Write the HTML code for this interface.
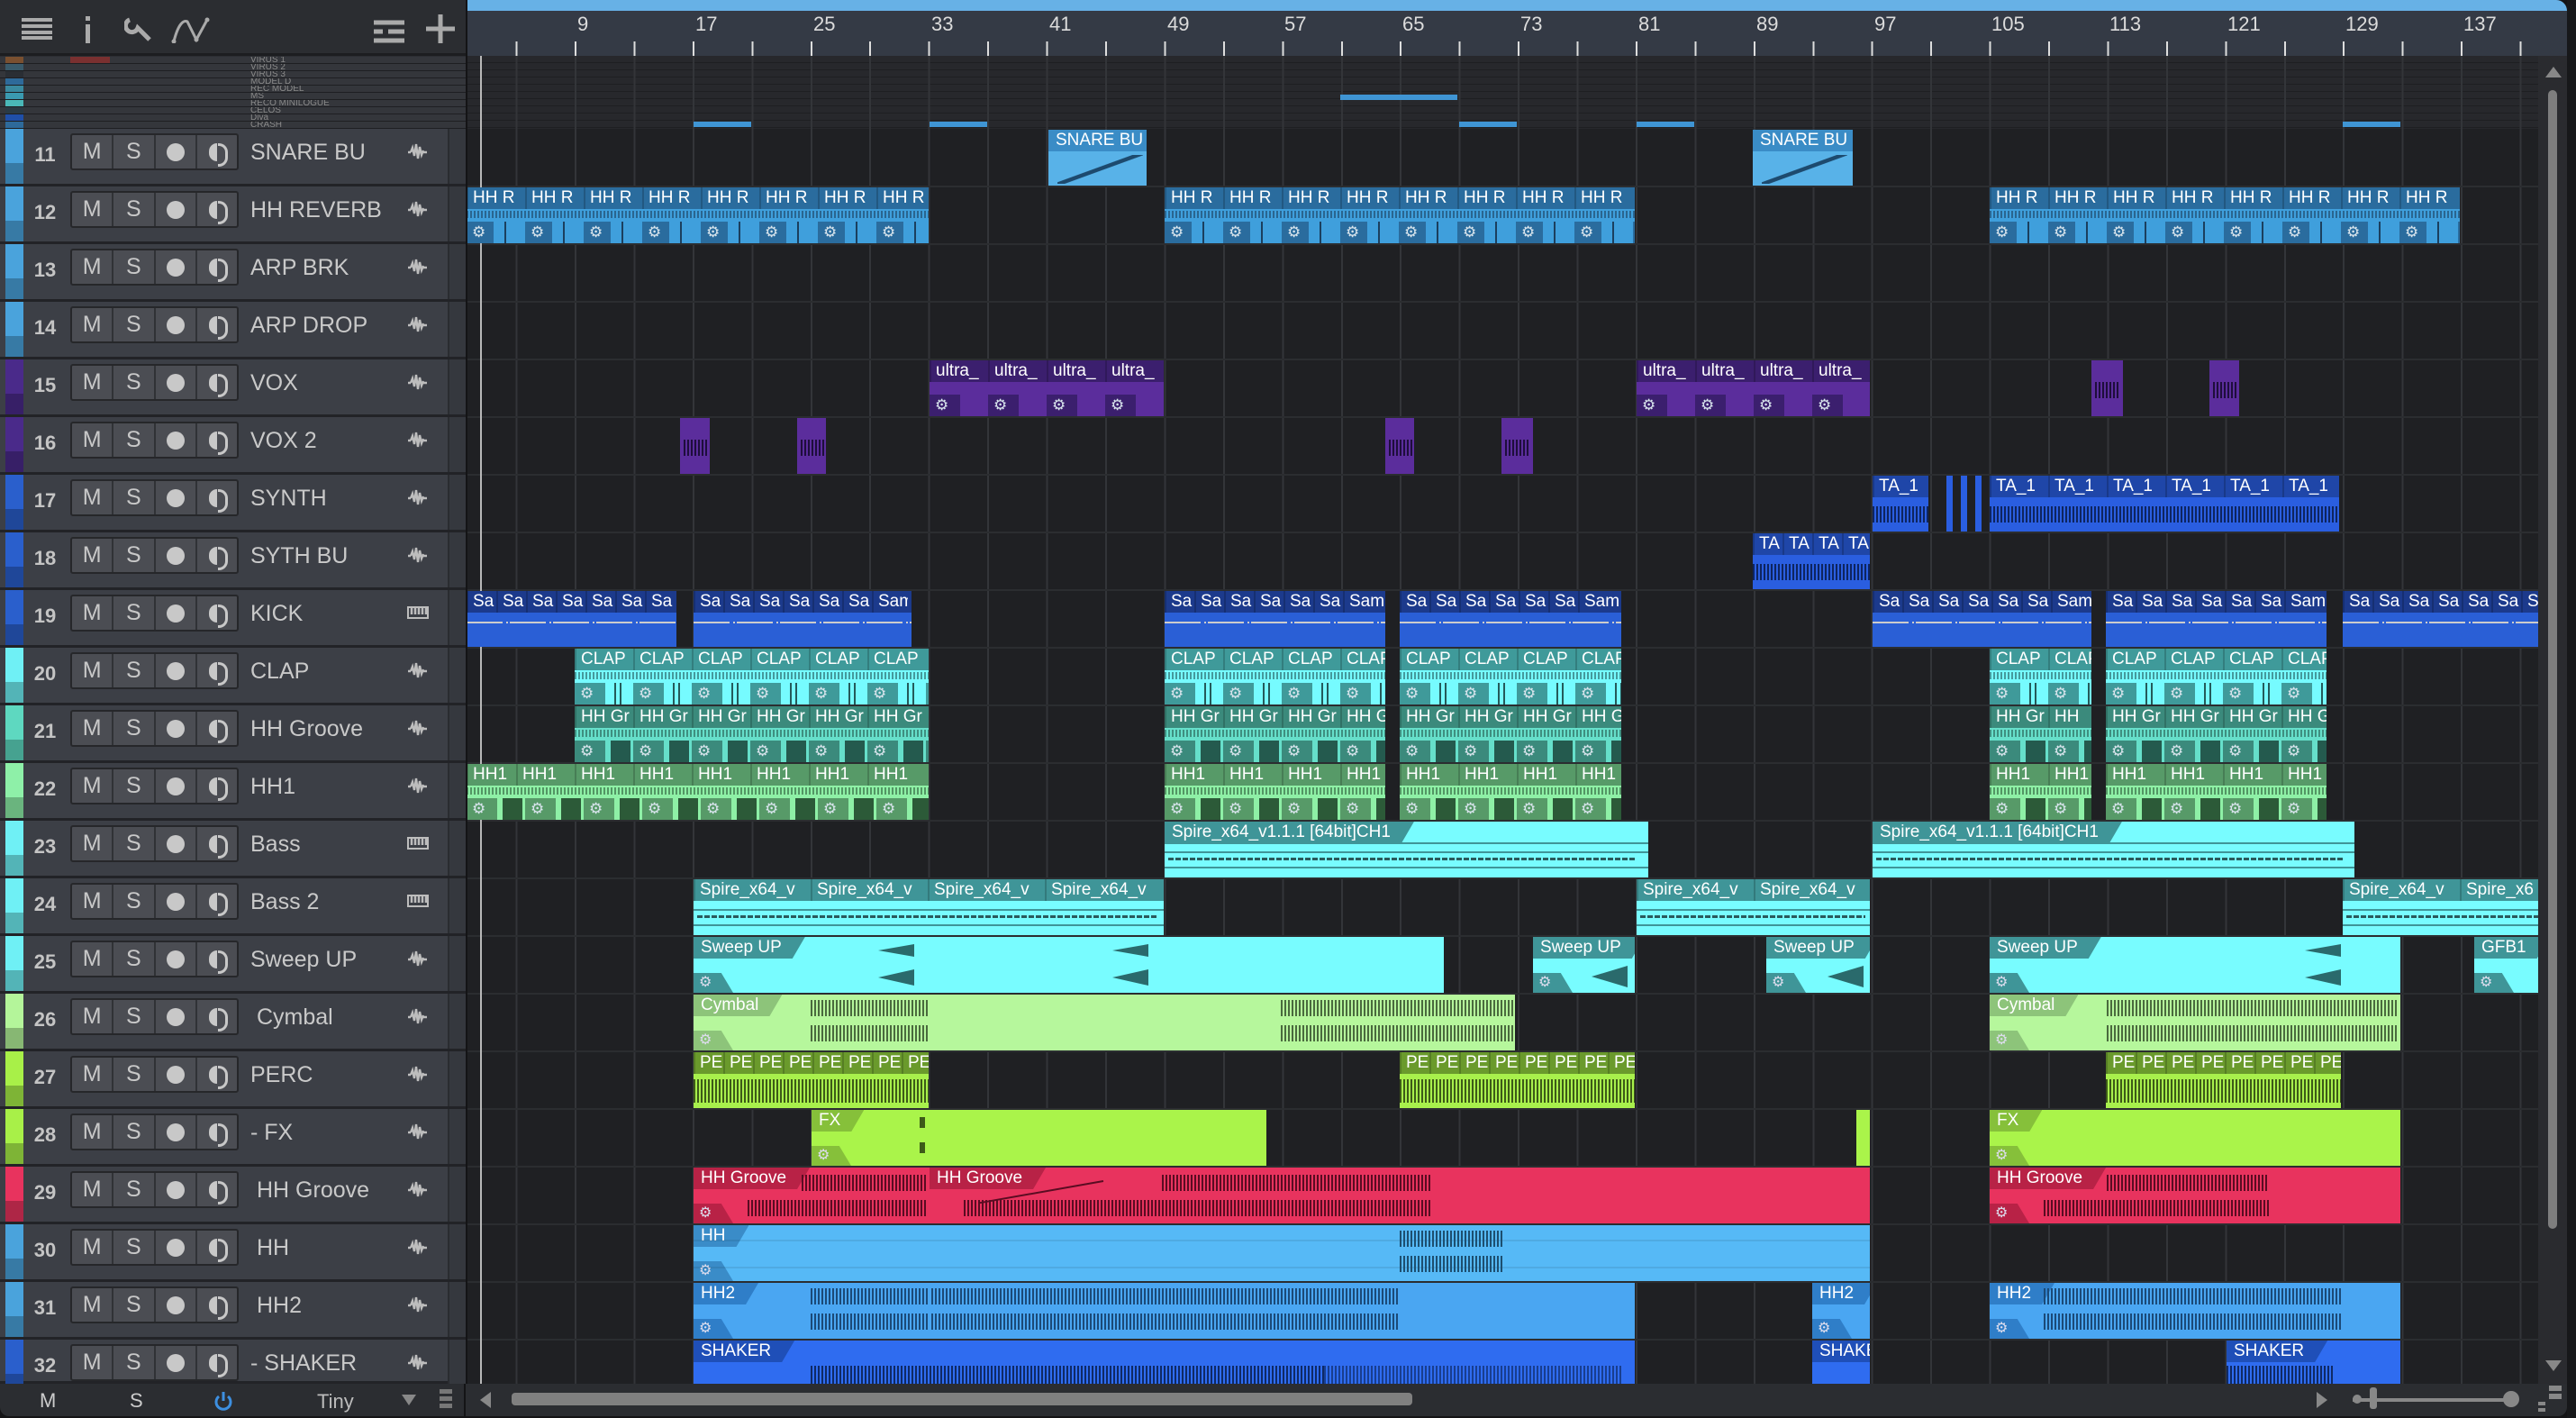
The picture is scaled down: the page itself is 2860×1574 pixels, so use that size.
<!DOCTYPE html>
<html><head><meta charset="utf-8"><style>
*{margin:0;padding:0;box-sizing:border-box}
body{width:2860px;height:1574px;background:#141416;overflow:hidden;position:relative;font-family:"Liberation Sans",sans-serif}
.abs{position:absolute}
#panel{position:absolute;left:0;top:0;width:517px;height:1536px;background:#2c2e32}
#tb{position:absolute;left:0;top:0;width:517px;height:62px;background:#2b2d31;border-bottom:3px solid #1c1d20}
.tr{position:absolute;left:0;width:517px;height:64px;background:#3c3f46;border-bottom:3px solid #222327}
.tr .st{position:absolute;left:6px;top:0;width:20px;height:61px}
.tr .st:after{content:"";position:absolute;left:0;top:38px;width:20px;height:23px;background:rgba(0,0,0,.25)}
.tr .n{position:absolute;left:30px;width:40px;top:16px;text-align:center;font:bold 22px "Liberation Sans",sans-serif;color:#c4c4c4}
.bt{position:absolute;left:78px;top:5px;width:187px;height:41px;background:#4b4d53;border:2px solid #26272a;border-radius:3px;display:flex}
.bt span{flex:1;border-right:2px solid #303236;text-align:center;line-height:37px;font-size:25px;color:#c8c8c8;position:relative}
.bt span:last-child{border-right:0}
.bt .r:after{content:"";position:absolute;left:50%;top:50%;width:20px;height:20px;margin:-10px 0 0 -10px;border-radius:50%;background:#c8c8c8}
.bt .m:before{content:"";position:absolute;left:calc(50% - 9px);top:50%;width:9px;height:20px;margin-top:-10px;border-radius:10px 0 0 10px;background:#c8c8c8}
.bt .m:after{content:"";position:absolute;left:calc(50% + 1px);top:50%;width:8px;height:20px;margin-top:-10px;border:3px solid #c8c8c8;border-left:0;border-radius:0 10px 10px 0}
.tr .nm{position:absolute;left:278px;top:12px;font-size:25px;color:#c9c9c9;white-space:nowrap}
.tr .ic{position:absolute;left:451px;top:14px;width:26px;height:22px}
.tr .rc{position:absolute;left:497px;top:0;width:20px;height:61px;background:#35383e;border-left:2px solid #2a2c30}
.tiny{position:absolute;left:0;width:517px;height:8px;border-bottom:1px solid #1e1f22;background:#34363b;overflow:hidden}
.tiny i{position:absolute;left:6px;top:0;width:20px;height:7px}
.tiny span{position:absolute;left:278px;top:-2px;font-size:10px;color:#8a8a8a}
#ruler{position:absolute;left:519px;top:0;width:2331px;height:62px;background:#343a45;border-radius:0 12px 0 0;overflow:hidden}
#ruler .bar{position:absolute;left:0;top:0;width:100%;height:12px;background:#67b1e6}
#ruler .ticks{position:absolute;left:0;top:46px;width:2299px;height:16px;background:repeating-linear-gradient(90deg,transparent 0 53.6px,#ddd 53.6px 55.6px,transparent 55.6px 65.44px)}
.rl{position:absolute;top:14px;font-size:22px;color:#dcdcdc}
#arr{position:absolute;left:519px;top:62px;width:2299px;height:1474px;background-color:#1f2023;overflow:hidden}
#grid{position:absolute;left:0;top:0;width:100%;height:100%;background:repeating-linear-gradient(90deg,transparent 0 53.6px,#333539 53.6px 55.6px,transparent 55.6px 65.44px)}
.hl{position:absolute;left:0;width:100%;height:2px;background:#2b2d30}
.cl{position:absolute;height:62px;overflow:hidden;white-space:nowrap;color:#fff;font-size:19px;background:var(--b)}
.cl .h{position:absolute;left:0;top:0;height:24px;line-height:24px;background:var(--h);white-space:nowrap;width:100%}
.cl .h span{display:inline-block;overflow:hidden;padding-left:5px;border-left:2px solid rgba(0,0,0,.18);vertical-align:top}
.cl .w{position:absolute;left:0;top:26px;width:100%;height:8px;background:repeating-linear-gradient(90deg,var(--d) 0 2px,transparent 2px 4px);opacity:.6}
.cl .g{position:absolute;left:0;top:38px;width:100%;height:24px;white-space:nowrap}
.cl .g span{display:inline-block;height:24px;line-height:24px;padding-left:6px;color:#d8e4ec;font-size:17px;vertical-align:top;overflow:hidden}
.cl .t{position:absolute;left:0;top:0;height:24px;line-height:24px;padding:0 26px 0 8px;background:var(--h);clip-path:polygon(0 0,100% 0,calc(100% - 14px) 100%,0 100%)}
.cl .gb{position:absolute;left:0;bottom:0;width:44px;height:22px;background:var(--h);clip-path:polygon(0 0,70% 0,100% 100%,0 100%);color:#dde;font-size:16px;line-height:22px;padding-left:6px}
.cl .wv{position:absolute;height:18px;background:repeating-linear-gradient(90deg,var(--d) 0 2px,transparent 2px 4px)}
.cl .ln{position:absolute;left:0;width:100%;height:2px;background:rgba(0,0,0,.08)}
.snare{--h:#3a8cc6;--b:#58b2e8;--d:#1d4a6e}
.hhr{--h:#2a6c9e;--b:#3f9fdc;--d:#1b3f5e}
.vox{--h:#3b1f6e;--b:#5b2d9c;--d:#1e0e3c}
.syn{--h:#1f46a8;--b:#2a5ee0;--d:#0e2560}
.kick{--h:#1c3a8c;--b:#2a5fd6;--d:#ccc}
.clap{--h:#3f9a9a;--b:#76fbff;--d:#245a5a}
.hhg{--h:#3b8a7c;--b:#66dfca;--d:#245a4e}
.hh1{--h:#579a68;--b:#8ef0a6;--d:#2c5a38}
.bass{--h:#3f9598;--b:#78fcff;--d:#2a6a6c}
.cym{--h:#8dc47a;--b:#b6f79c;--d:#4a6a3e}
.perc{--h:#6a9a2c;--b:#a8f04c;--d:#3d5a18}
.fx{--h:#86c03a;--b:#aaf44a;--d:#4a7020}
.red{--h:#b82246;--b:#e8335e;--d:#5a0c22}
.hh{--h:#3a8cc8;--b:#56b9f6;--d:#1d4f70}
.hh2{--h:#2f7ec8;--b:#4aa6f2;--d:#1b4a78}
.shk{--h:#1f4fb8;--b:#2f6cf0;--d:#0f2a66}
#vs{position:absolute;left:2818px;top:62px;width:32px;height:1474px;background:#2a2b2f}
#bot{position:absolute;left:0;top:1536px;width:2850px;height:36px;background:#2b2d31;border-radius:0 0 10px 10px}
</style></head><body>
<svg width="0" height="0" style="position:absolute"><defs>
<symbol id="wv" viewBox="0 0 26 22"><path d="M2 12h3M5 12l2-5 2 9 2-13 2 16 2-13 2 9 2-5M19 12h4" stroke="#bdbdbd" stroke-width="2.4" fill="none"/></symbol>
<symbol id="kb" viewBox="0 0 26 22"><path d="M2 5h22v12H2z" fill="none" stroke="#bdbdbd" stroke-width="2"/><path d="M6 5v8M10 5v8M14 5v8M18 5v8M22 5v8" stroke="#bdbdbd" stroke-width="2.5"/></symbol>
</defs></svg>

<div id="panel">
<div id="tb">
<svg class="abs" style="left:24px;top:20px" width="34" height="24"><path d="M0 2h34M0 9h34M0 16h34M0 22h34" stroke="#aaa" stroke-width="4"/></svg>
<svg class="abs" style="left:92px;top:18px" width="12" height="30"><rect x="3" y="0" width="5" height="5" fill="#aaa"/><rect x="3" y="9" width="5" height="21" fill="#aaa"/></svg>
<svg class="abs" style="left:138px;top:18px" width="32" height="30"><path d="M6 4a7 7 0 1 0 9 9l13 13" stroke="#aaa" stroke-width="5" fill="none"/></svg>
<svg class="abs" style="left:190px;top:18px" width="46" height="30"><path d="M3 28 C8 8 14 4 18 6 L28 26 L40 4" stroke="#aaa" stroke-width="3" fill="none"/><circle cx="3" cy="28" r="2.5" fill="#aaa"/><circle cx="28" cy="26" r="2.5" fill="#aaa"/><circle cx="40" cy="4" r="2.5" fill="#aaa"/></svg>
<svg class="abs" style="left:415px;top:22px" width="34" height="26"><path d="M0 3h34M0 13h10M16 13h18M0 23h34" stroke="#aaa" stroke-width="5"/></svg>
<svg class="abs" style="left:473px;top:16px" width="32" height="32"><path d="M16 0v32M0 16h32" stroke="#aaa" stroke-width="5"/></svg>
</div>
<div class="tiny" style="top:63px"><i style="background:#7a5030"></i><i style="left:78px;width:44px;background:#7a3030"></i><span>VIRUS 1</span></div>
<div class="tiny" style="top:71px"><i style="background:#3a5a6a"></i><span>VIRUS 2</span></div>
<div class="tiny" style="top:79px"><i style="background:#2a2e34"></i><span>VIRUS 3</span></div>
<div class="tiny" style="top:87px"><i style="background:#2e6a9a"></i><span>MODEL D</span></div>
<div class="tiny" style="top:95px"><i style="background:#3a8aa0"></i><span>REC MODEL</span></div>
<div class="tiny" style="top:103px"><i style="background:#3a9ab0"></i><span>MS</span></div>
<div class="tiny" style="top:111px"><i style="background:#4ab8b8"></i><span>RECO MINILOGUE</span></div>
<div class="tiny" style="top:119px"><i style="background:#2a3a44"></i><span>CELOS</span></div>
<div class="tiny" style="top:127px"><i style="background:#1f4fa8"></i><span>Diva</span></div>
<div class="tiny" style="top:135px;height:8px"><i style="background:#2e6a9a"></i><span>CRASH</span></div>

<div class="tr" style="top:143px"><i class="st" style="background:#4aa3dc"></i><b class="n">11</b><div class="bt"><span>M</span><span>S</span><span class="r"></span><span class="m"></span></div><span class="nm">SNARE BU</span><svg class="ic"><use href="#wv"/></svg><i class="rc"></i></div>
<div class="tr" style="top:207px"><i class="st" style="background:#4aa3dc"></i><b class="n">12</b><div class="bt"><span>M</span><span>S</span><span class="r"></span><span class="m"></span></div><span class="nm">HH REVERB</span><svg class="ic"><use href="#wv"/></svg><i class="rc"></i></div>
<div class="tr" style="top:271px"><i class="st" style="background:#4aa3dc"></i><b class="n">13</b><div class="bt"><span>M</span><span>S</span><span class="r"></span><span class="m"></span></div><span class="nm">ARP BRK</span><svg class="ic"><use href="#wv"/></svg><i class="rc"></i></div>
<div class="tr" style="top:335px"><i class="st" style="background:#4aa3dc"></i><b class="n">14</b><div class="bt"><span>M</span><span>S</span><span class="r"></span><span class="m"></span></div><span class="nm">ARP DROP</span><svg class="ic"><use href="#wv"/></svg><i class="rc"></i></div>
<div class="tr" style="top:399px"><i class="st" style="background:#4a2a8a"></i><b class="n">15</b><div class="bt"><span>M</span><span>S</span><span class="r"></span><span class="m"></span></div><span class="nm">VOX</span><svg class="ic"><use href="#wv"/></svg><i class="rc"></i></div>
<div class="tr" style="top:463px"><i class="st" style="background:#4a2a8a"></i><b class="n">16</b><div class="bt"><span>M</span><span>S</span><span class="r"></span><span class="m"></span></div><span class="nm">VOX 2</span><svg class="ic"><use href="#wv"/></svg><i class="rc"></i></div>
<div class="tr" style="top:527px"><i class="st" style="background:#2a5fcc"></i><b class="n">17</b><div class="bt"><span>M</span><span>S</span><span class="r"></span><span class="m"></span></div><span class="nm">SYNTH</span><svg class="ic"><use href="#wv"/></svg><i class="rc"></i></div>
<div class="tr" style="top:591px"><i class="st" style="background:#2a5fcc"></i><b class="n">18</b><div class="bt"><span>M</span><span>S</span><span class="r"></span><span class="m"></span></div><span class="nm">SYTH BU</span><svg class="ic"><use href="#wv"/></svg><i class="rc"></i></div>
<div class="tr" style="top:655px"><i class="st" style="background:#2a5fcc"></i><b class="n">19</b><div class="bt"><span>M</span><span>S</span><span class="r"></span><span class="m"></span></div><span class="nm">KICK</span><svg class="ic"><use href="#kb"/></svg><i class="rc"></i></div>
<div class="tr" style="top:719px"><i class="st" style="background:#6ff0f5"></i><b class="n">20</b><div class="bt"><span>M</span><span>S</span><span class="r"></span><span class="m"></span></div><span class="nm">CLAP</span><svg class="ic"><use href="#wv"/></svg><i class="rc"></i></div>
<div class="tr" style="top:783px"><i class="st" style="background:#5ed8c0"></i><b class="n">21</b><div class="bt"><span>M</span><span>S</span><span class="r"></span><span class="m"></span></div><span class="nm">HH Groove</span><svg class="ic"><use href="#wv"/></svg><i class="rc"></i></div>
<div class="tr" style="top:847px"><i class="st" style="background:#8ef0a8"></i><b class="n">22</b><div class="bt"><span>M</span><span>S</span><span class="r"></span><span class="m"></span></div><span class="nm">HH1</span><svg class="ic"><use href="#wv"/></svg><i class="rc"></i></div>
<div class="tr" style="top:911px"><i class="st" style="background:#6ff0f5"></i><b class="n">23</b><div class="bt"><span>M</span><span>S</span><span class="r"></span><span class="m"></span></div><span class="nm">Bass</span><svg class="ic"><use href="#kb"/></svg><i class="rc"></i></div>
<div class="tr" style="top:975px"><i class="st" style="background:#6ff0f5"></i><b class="n">24</b><div class="bt"><span>M</span><span>S</span><span class="r"></span><span class="m"></span></div><span class="nm">Bass 2</span><svg class="ic"><use href="#kb"/></svg><i class="rc"></i></div>
<div class="tr" style="top:1039px"><i class="st" style="background:#6ff0f5"></i><b class="n">25</b><div class="bt"><span>M</span><span>S</span><span class="r"></span><span class="m"></span></div><span class="nm">Sweep UP</span><svg class="ic"><use href="#wv"/></svg><i class="rc"></i></div>
<div class="tr" style="top:1103px"><i class="st" style="background:#b4f59a"></i><b class="n">26</b><div class="bt"><span>M</span><span>S</span><span class="r"></span><span class="m"></span></div><span class="nm" style="left:285px">Cymbal</span><svg class="ic"><use href="#wv"/></svg><i class="rc"></i></div>
<div class="tr" style="top:1167px"><i class="st" style="background:#a8f048"></i><b class="n">27</b><div class="bt"><span>M</span><span>S</span><span class="r"></span><span class="m"></span></div><span class="nm">PERC</span><svg class="ic"><use href="#wv"/></svg><i class="rc"></i></div>
<div class="tr" style="top:1231px"><i class="st" style="background:#a8f048"></i><b class="n">28</b><div class="bt"><span>M</span><span>S</span><span class="r"></span><span class="m"></span></div><span class="nm">- FX</span><svg class="ic"><use href="#wv"/></svg><i class="rc"></i></div>
<div class="tr" style="top:1295px"><i class="st" style="background:#e8335e"></i><b class="n">29</b><div class="bt"><span>M</span><span>S</span><span class="r"></span><span class="m"></span></div><span class="nm" style="left:285px">HH Groove</span><svg class="ic"><use href="#wv"/></svg><i class="rc"></i></div>
<div class="tr" style="top:1359px"><i class="st" style="background:#4aa3dc"></i><b class="n">30</b><div class="bt"><span>M</span><span>S</span><span class="r"></span><span class="m"></span></div><span class="nm" style="left:285px">HH</span><svg class="ic"><use href="#wv"/></svg><i class="rc"></i></div>
<div class="tr" style="top:1423px"><i class="st" style="background:#4aa3dc"></i><b class="n">31</b><div class="bt"><span>M</span><span>S</span><span class="r"></span><span class="m"></span></div><span class="nm" style="left:285px">HH2</span><svg class="ic"><use href="#wv"/></svg><i class="rc"></i></div>
<div class="tr" style="top:1487px;height:49px"><i class="st" style="background:#2a5fcc"></i><b class="n">32</b><div class="bt"><span>M</span><span>S</span><span class="r"></span><span class="m"></span></div><span class="nm">- SHAKER</span><svg class="ic"><use href="#wv"/></svg><i class="rc" style="height:49px"></i></div>
</div>
<div class="abs" style="left:517px;top:0;width:2px;height:1574px;background:#141416"></div>

<div id="ruler"><div class="bar"></div><div class="ticks"></div>
<span class="rl" style="left:122px">9</span><span class="rl" style="left:253px">17</span><span class="rl" style="left:384px">25</span><span class="rl" style="left:515px">33</span><span class="rl" style="left:646px">41</span><span class="rl" style="left:777px">49</span><span class="rl" style="left:907px">57</span><span class="rl" style="left:1038px">65</span><span class="rl" style="left:1169px">73</span><span class="rl" style="left:1300px">81</span><span class="rl" style="left:1431px">89</span><span class="rl" style="left:1562px">97</span><span class="rl" style="left:1692px">105</span><span class="rl" style="left:1823px">113</span><span class="rl" style="left:1954px">121</span><span class="rl" style="left:2085px">129</span><span class="rl" style="left:2216px">137</span>
</div>

<div id="arr">
<div class="abs" style="left:0;top:0;width:100%;height:81px;background:repeating-linear-gradient(180deg,#27282c 0 7px,#1e1f22 7px 8px)"></div>
<div id="grid"></div>
<div class="abs" style="left:251px;top:73px;width:64px;height:6px;background:#3f95d4"></div>
<div class="abs" style="left:513px;top:73px;width:64px;height:6px;background:#3f95d4"></div>
<div class="abs" style="left:969px;top:43px;width:130px;height:6px;background:#3f95d4"></div>
<div class="abs" style="left:1101px;top:73px;width:64px;height:6px;background:#3f95d4"></div>
<div class="abs" style="left:1298px;top:73px;width:64px;height:6px;background:#3f95d4"></div>
<div class="abs" style="left:2082px;top:73px;width:64px;height:6px;background:#3f95d4"></div>
<div class="hl" style="top:144px"></div><div class="hl" style="top:208px"></div><div class="hl" style="top:272px"></div><div class="hl" style="top:336px"></div><div class="hl" style="top:400px"></div><div class="hl" style="top:464px"></div><div class="hl" style="top:528px"></div><div class="hl" style="top:592px"></div><div class="hl" style="top:656px"></div><div class="hl" style="top:720px"></div><div class="hl" style="top:784px"></div><div class="hl" style="top:848px"></div><div class="hl" style="top:912px"></div><div class="hl" style="top:976px"></div><div class="hl" style="top:1040px"></div><div class="hl" style="top:1104px"></div><div class="hl" style="top:1168px"></div><div class="hl" style="top:1232px"></div><div class="hl" style="top:1296px"></div><div class="hl" style="top:1360px"></div><div class="hl" style="top:1424px"></div>
<div class="abs" style="left:14px;top:0;width:2px;height:100%;background:#b8b8b8"></div>
</div>

<div class="abs" style="left:0;top:0;width:2818px;height:1536px;overflow:hidden;clip-path:inset(62px 0 0 519px)">
<div class="cl snare" style="left:1164px;top:144px;width:109px"><div class="t">SNARE BU</div><div class="abs" style="left:10px;top:28px;width:95px;height:32px;background:linear-gradient(160deg,transparent 45%,#1d4a6e 46% 52%,transparent 53%)"></div></div>
<div class="cl snare" style="left:1946px;top:144px;width:111px"><div class="t">SNARE BU</div><div class="abs" style="left:10px;top:28px;width:95px;height:32px;background:linear-gradient(160deg,transparent 45%,#1d4a6e 46% 52%,transparent 53%)"></div></div>
<div class="cl hhr" style="left:518px;top:208px;width:513px"><div class="h"><span style="width:65px">HH R</span><span style="width:65px">HH R</span><span style="width:65px">HH R</span><span style="width:65px">HH R</span><span style="width:65px">HH R</span><span style="width:65px">HH R</span><span style="width:65px">HH R</span><span style="width:65px">HH R</span></div><div class="w"></div><div class="g" style="background:repeating-linear-gradient(90deg,var(--h) 0 30px,transparent 30px 42px,var(--d) 42px 44px,transparent 44px 65px)"><span style="width:65px">⚙</span><span style="width:65px">⚙</span><span style="width:65px">⚙</span><span style="width:65px">⚙</span><span style="width:65px">⚙</span><span style="width:65px">⚙</span><span style="width:65px">⚙</span><span style="width:65px">⚙</span></div></div>
<div class="cl hhr" style="left:1293px;top:208px;width:522px"><div class="h"><span style="width:65px">HH R</span><span style="width:65px">HH R</span><span style="width:65px">HH R</span><span style="width:65px">HH R</span><span style="width:65px">HH R</span><span style="width:65px">HH R</span><span style="width:65px">HH R</span><span style="width:65px">HH R</span></div><div class="w"></div><div class="g" style="background:repeating-linear-gradient(90deg,var(--h) 0 30px,transparent 30px 42px,var(--d) 42px 44px,transparent 44px 65px)"><span style="width:65px">⚙</span><span style="width:65px">⚙</span><span style="width:65px">⚙</span><span style="width:65px">⚙</span><span style="width:65px">⚙</span><span style="width:65px">⚙</span><span style="width:65px">⚙</span><span style="width:65px">⚙</span></div></div>
<div class="cl hhr" style="left:2209px;top:208px;width:522px"><div class="h"><span style="width:65px">HH R</span><span style="width:65px">HH R</span><span style="width:65px">HH R</span><span style="width:65px">HH R</span><span style="width:65px">HH R</span><span style="width:65px">HH R</span><span style="width:65px">HH R</span><span style="width:65px">HH R</span></div><div class="w"></div><div class="g" style="background:repeating-linear-gradient(90deg,var(--h) 0 30px,transparent 30px 42px,var(--d) 42px 44px,transparent 44px 65px)"><span style="width:65px">⚙</span><span style="width:65px">⚙</span><span style="width:65px">⚙</span><span style="width:65px">⚙</span><span style="width:65px">⚙</span><span style="width:65px">⚙</span><span style="width:65px">⚙</span><span style="width:65px">⚙</span></div></div>
<div class="cl vox" style="left:1032px;top:400px;width:260px"><div class="h"><span style="width:65px">ultra_</span><span style="width:65px">ultra_</span><span style="width:65px">ultra_</span><span style="width:65px">ultra_</span></div><div class="g" style="background:repeating-linear-gradient(90deg,var(--h) 0 34px,transparent 34px 65px)"><span style="width:65px">⚙</span><span style="width:65px">⚙</span><span style="width:65px">⚙</span><span style="width:65px">⚙</span></div></div>
<div class="cl vox" style="left:1817px;top:400px;width:259px"><div class="h"><span style="width:65px">ultra_</span><span style="width:65px">ultra_</span><span style="width:65px">ultra_</span><span style="width:65px">ultra_</span></div><div class="g" style="background:repeating-linear-gradient(90deg,var(--h) 0 34px,transparent 34px 65px)"><span style="width:65px">⚙</span><span style="width:65px">⚙</span><span style="width:65px">⚙</span><span style="width:65px">⚙</span></div></div>
<div class="cl vox" style="left:2322px;top:400px;width:35px"><div class="wv" style="left:4px;top:24px;width:26px"></div></div>
<div class="cl vox" style="left:2453px;top:400px;width:33px"><div class="wv" style="left:4px;top:24px;width:26px"></div></div>
<div class="cl vox" style="left:755px;top:464px;width:33px"><div class="wv" style="left:4px;top:24px;width:26px"></div></div>
<div class="cl vox" style="left:885px;top:464px;width:32px"><div class="wv" style="left:4px;top:24px;width:26px"></div></div>
<div class="cl vox" style="left:1538px;top:464px;width:32px"><div class="wv" style="left:4px;top:24px;width:26px"></div></div>
<div class="cl vox" style="left:1667px;top:464px;width:35px"><div class="wv" style="left:4px;top:24px;width:26px"></div></div>
<div class="cl syn" style="left:2079px;top:528px;width:62px"><div class="h"><span style="width:65px">TA_1</span></div><div class="wv" style="left:0;top:34px;width:100%"></div></div>
<div class="cl syn" style="left:2161px;top:528px;width:7px"></div><div class="cl syn" style="left:2177px;top:528px;width:7px"></div><div class="cl syn" style="left:2193px;top:528px;width:7px"></div>
<div class="cl syn" style="left:2209px;top:528px;width:388px"><div class="h"><span style="width:65px">TA_1</span><span style="width:65px">TA_1</span><span style="width:65px">TA_1</span><span style="width:65px">TA_1</span><span style="width:65px">TA_1</span><span style="width:65px">TA_1</span></div><div class="wv" style="left:0;top:34px;width:100%"></div></div>
<div class="cl syn" style="left:1946px;top:592px;width:130px"><div class="h"><span style="width:33px">TA</span><span style="width:33px">TA</span><span style="width:33px">TA</span><span style="width:33px">TA</span></div><div class="wv" style="left:0;top:34px;width:100%"></div></div>
<div class="cl kick" style="left:518px;top:656px;width:233px"><div class="h"><span style="width:33px">Sa</span><span style="width:33px">Sa</span><span style="width:33px">Sa</span><span style="width:33px">Sa</span><span style="width:33px">Sa</span><span style="width:33px">Sa</span><span style="width:40px">Sa</span></div><div class="abs" style="left:0;top:34px;width:100%;height:2px;background:repeating-linear-gradient(90deg,#ccc 0 40px,transparent 40px 44px,#ccc 44px 46px,transparent 46px 48px)"></div></div>
<div class="cl kick" style="left:770px;top:656px;width:242px"><div class="h"><span style="width:33px">Sa</span><span style="width:33px">Sa</span><span style="width:33px">Sa</span><span style="width:33px">Sa</span><span style="width:33px">Sa</span><span style="width:33px">Sa</span><span style="width:40px">Sam</span></div><div class="abs" style="left:0;top:34px;width:100%;height:2px;background:repeating-linear-gradient(90deg,#ccc 0 40px,transparent 40px 44px,#ccc 44px 46px,transparent 46px 48px)"></div></div>
<div class="cl kick" style="left:1293px;top:656px;width:245px"><div class="h"><span style="width:33px">Sa</span><span style="width:33px">Sa</span><span style="width:33px">Sa</span><span style="width:33px">Sa</span><span style="width:33px">Sa</span><span style="width:33px">Sa</span><span style="width:45px">Sam</span></div><div class="abs" style="left:0;top:34px;width:100%;height:2px;background:repeating-linear-gradient(90deg,#ccc 0 40px,transparent 40px 44px,#ccc 44px 46px,transparent 46px 48px)"></div></div>
<div class="cl kick" style="left:1554px;top:656px;width:246px"><div class="h"><span style="width:33px">Sa</span><span style="width:33px">Sa</span><span style="width:33px">Sa</span><span style="width:33px">Sa</span><span style="width:33px">Sa</span><span style="width:33px">Sa</span><span style="width:45px">Sam</span></div><div class="abs" style="left:0;top:34px;width:100%;height:2px;background:repeating-linear-gradient(90deg,#ccc 0 40px,transparent 40px 44px,#ccc 44px 46px,transparent 46px 48px)"></div></div>
<div class="cl kick" style="left:2079px;top:656px;width:243px"><div class="h"><span style="width:33px">Sa</span><span style="width:33px">Sa</span><span style="width:33px">Sa</span><span style="width:33px">Sa</span><span style="width:33px">Sa</span><span style="width:33px">Sa</span><span style="width:45px">Sam</span></div><div class="abs" style="left:0;top:34px;width:100%;height:2px;background:repeating-linear-gradient(90deg,#ccc 0 40px,transparent 40px 44px,#ccc 44px 46px,transparent 46px 48px)"></div></div>
<div class="cl kick" style="left:2338px;top:656px;width:245px"><div class="h"><span style="width:33px">Sa</span><span style="width:33px">Sa</span><span style="width:33px">Sa</span><span style="width:33px">Sa</span><span style="width:33px">Sa</span><span style="width:33px">Sa</span><span style="width:45px">Sam</span></div><div class="abs" style="left:0;top:34px;width:100%;height:2px;background:repeating-linear-gradient(90deg,#ccc 0 40px,transparent 40px 44px,#ccc 44px 46px,transparent 46px 48px)"></div></div>
<div class="cl kick" style="left:2601px;top:656px;width:217px"><div class="h"><span style="width:33px">Sa</span><span style="width:33px">Sa</span><span style="width:33px">Sa</span><span style="width:33px">Sa</span><span style="width:33px">Sa</span><span style="width:33px">Sa</span><span style="width:33px">S</span></div><div class="abs" style="left:0;top:34px;width:100%;height:2px;background:repeating-linear-gradient(90deg,#ccc 0 40px,transparent 40px 44px,#ccc 44px 46px,transparent 46px 48px)"></div></div>
</div>

<div class="abs" style="left:0;top:0;width:2818px;height:1536px;overflow:hidden;clip-path:inset(62px 0 0 519px)">
<div class="cl clap" style="left:638px;top:720px;width:393px"><div class="h"><span style="width:65px">CLAP</span><span style="width:65px">CLAP</span><span style="width:65px">CLAP</span><span style="width:65px">CLAP</span><span style="width:65px">CLAP</span><span style="width:65px">CLAP</span></div><div class="w"></div><div class="g" style="background:repeating-linear-gradient(90deg,var(--h) 0 34px,transparent 34px 44px,var(--d) 44px 46px,transparent 46px 50px,var(--d) 50px 52px,transparent 52px 65px)"><span style="width:65px">⚙</span><span style="width:65px">⚙</span><span style="width:65px">⚙</span><span style="width:65px">⚙</span><span style="width:65px">⚙</span><span style="width:65px">⚙</span></div></div>
<div class="cl clap" style="left:1293px;top:720px;width:245px"><div class="h"><span style="width:65px">CLAP</span><span style="width:65px">CLAP</span><span style="width:65px">CLAP</span><span style="width:65px">CLAP</span></div><div class="w"></div><div class="g" style="background:repeating-linear-gradient(90deg,var(--h) 0 34px,transparent 34px 44px,var(--d) 44px 46px,transparent 46px 50px,var(--d) 50px 52px,transparent 52px 65px)"><span style="width:65px">⚙</span><span style="width:65px">⚙</span><span style="width:65px">⚙</span><span style="width:65px">⚙</span></div></div>
<div class="cl clap" style="left:1554px;top:720px;width:246px"><div class="h"><span style="width:65px">CLAP</span><span style="width:65px">CLAP</span><span style="width:65px">CLAP</span><span style="width:65px">CLAP</span></div><div class="w"></div><div class="g" style="background:repeating-linear-gradient(90deg,var(--h) 0 34px,transparent 34px 44px,var(--d) 44px 46px,transparent 46px 50px,var(--d) 50px 52px,transparent 52px 65px)"><span style="width:65px">⚙</span><span style="width:65px">⚙</span><span style="width:65px">⚙</span><span style="width:65px">⚙</span></div></div>
<div class="cl clap" style="left:2209px;top:720px;width:113px"><div class="h"><span style="width:65px">CLAP</span><span style="width:65px">CLAP</span></div><div class="w"></div><div class="g" style="background:repeating-linear-gradient(90deg,var(--h) 0 34px,transparent 34px 44px,var(--d) 44px 46px,transparent 46px 50px,var(--d) 50px 52px,transparent 52px 65px)"><span style="width:65px">⚙</span><span style="width:65px">⚙</span></div></div>
<div class="cl clap" style="left:2338px;top:720px;width:245px"><div class="h"><span style="width:65px">CLAP</span><span style="width:65px">CLAP</span><span style="width:65px">CLAP</span><span style="width:65px">CLAP</span></div><div class="w"></div><div class="g" style="background:repeating-linear-gradient(90deg,var(--h) 0 34px,transparent 34px 44px,var(--d) 44px 46px,transparent 46px 50px,var(--d) 50px 52px,transparent 52px 65px)"><span style="width:65px">⚙</span><span style="width:65px">⚙</span><span style="width:65px">⚙</span><span style="width:65px">⚙</span></div></div>

<div class="cl hhg" style="left:638px;top:784px;width:393px"><div class="h"><span style="width:65px">HH Gr</span><span style="width:65px">HH Gr</span><span style="width:65px">HH Gr</span><span style="width:65px">HH Gr</span><span style="width:65px">HH Gr</span><span style="width:65px">HH Gr</span></div><div class="w"></div><div class="g" style="background:repeating-linear-gradient(90deg,var(--h) 0 34px,transparent 34px 40px,var(--d) 40px 62px,transparent 62px 65px)"><span style="width:65px">⚙</span><span style="width:65px">⚙</span><span style="width:65px">⚙</span><span style="width:65px">⚙</span><span style="width:65px">⚙</span><span style="width:65px">⚙</span></div></div>
<div class="cl hhg" style="left:1293px;top:784px;width:245px"><div class="h"><span style="width:65px">HH Gr</span><span style="width:65px">HH Gr</span><span style="width:65px">HH Gr</span><span style="width:65px">HH Gr</span></div><div class="w"></div><div class="g" style="background:repeating-linear-gradient(90deg,var(--h) 0 34px,transparent 34px 40px,var(--d) 40px 62px,transparent 62px 65px)"><span style="width:65px">⚙</span><span style="width:65px">⚙</span><span style="width:65px">⚙</span><span style="width:65px">⚙</span></div></div>
<div class="cl hhg" style="left:1554px;top:784px;width:246px"><div class="h"><span style="width:65px">HH Gr</span><span style="width:65px">HH Gr</span><span style="width:65px">HH Gr</span><span style="width:65px">HH Gr</span></div><div class="w"></div><div class="g" style="background:repeating-linear-gradient(90deg,var(--h) 0 34px,transparent 34px 40px,var(--d) 40px 62px,transparent 62px 65px)"><span style="width:65px">⚙</span><span style="width:65px">⚙</span><span style="width:65px">⚙</span><span style="width:65px">⚙</span></div></div>
<div class="cl hhg" style="left:2209px;top:784px;width:113px"><div class="h"><span style="width:65px">HH Gr</span><span style="width:65px">HH</span></div><div class="w"></div><div class="g" style="background:repeating-linear-gradient(90deg,var(--h) 0 34px,transparent 34px 40px,var(--d) 40px 62px,transparent 62px 65px)"><span style="width:65px">⚙</span><span style="width:65px">⚙</span></div></div>
<div class="cl hhg" style="left:2338px;top:784px;width:245px"><div class="h"><span style="width:65px">HH Gr</span><span style="width:65px">HH Gr</span><span style="width:65px">HH Gr</span><span style="width:65px">HH Gr</span></div><div class="w"></div><div class="g" style="background:repeating-linear-gradient(90deg,var(--h) 0 34px,transparent 34px 40px,var(--d) 40px 62px,transparent 62px 65px)"><span style="width:65px">⚙</span><span style="width:65px">⚙</span><span style="width:65px">⚙</span><span style="width:65px">⚙</span></div></div>

<div class="cl hh1" style="left:518px;top:848px;width:513px"><div class="h"><span style="width:55px">HH1</span><span style="width:65px">HH1</span><span style="width:65px">HH1</span><span style="width:65px">HH1</span><span style="width:65px">HH1</span><span style="width:65px">HH1</span><span style="width:65px">HH1</span><span style="width:65px">HH1</span></div><div class="w"></div><div class="g" style="background:repeating-linear-gradient(90deg,var(--h) 0 34px,transparent 34px 40px,var(--d) 40px 62px,transparent 62px 65px)"><span style="width:65px">⚙</span><span style="width:65px">⚙</span><span style="width:65px">⚙</span><span style="width:65px">⚙</span><span style="width:65px">⚙</span><span style="width:65px">⚙</span><span style="width:65px">⚙</span><span style="width:65px">⚙</span></div></div>
<div class="cl hh1" style="left:1293px;top:848px;width:245px"><div class="h"><span style="width:65px">HH1</span><span style="width:65px">HH1</span><span style="width:65px">HH1</span><span style="width:65px">HH1</span></div><div class="w"></div><div class="g" style="background:repeating-linear-gradient(90deg,var(--h) 0 34px,transparent 34px 40px,var(--d) 40px 62px,transparent 62px 65px)"><span style="width:65px">⚙</span><span style="width:65px">⚙</span><span style="width:65px">⚙</span><span style="width:65px">⚙</span></div></div>
<div class="cl hh1" style="left:1554px;top:848px;width:246px"><div class="h"><span style="width:65px">HH1</span><span style="width:65px">HH1</span><span style="width:65px">HH1</span><span style="width:65px">HH1</span></div><div class="w"></div><div class="g" style="background:repeating-linear-gradient(90deg,var(--h) 0 34px,transparent 34px 40px,var(--d) 40px 62px,transparent 62px 65px)"><span style="width:65px">⚙</span><span style="width:65px">⚙</span><span style="width:65px">⚙</span><span style="width:65px">⚙</span></div></div>
<div class="cl hh1" style="left:2209px;top:848px;width:113px"><div class="h"><span style="width:65px">HH1</span><span style="width:65px">HH1</span></div><div class="w"></div><div class="g" style="background:repeating-linear-gradient(90deg,var(--h) 0 34px,transparent 34px 40px,var(--d) 40px 62px,transparent 62px 65px)"><span style="width:65px">⚙</span><span style="width:65px">⚙</span></div></div>
<div class="cl hh1" style="left:2338px;top:848px;width:245px"><div class="h"><span style="width:65px">HH1</span><span style="width:65px">HH1</span><span style="width:65px">HH1</span><span style="width:65px">HH1</span></div><div class="w"></div><div class="g" style="background:repeating-linear-gradient(90deg,var(--h) 0 34px,transparent 34px 40px,var(--d) 40px 62px,transparent 62px 65px)"><span style="width:65px">⚙</span><span style="width:65px">⚙</span><span style="width:65px">⚙</span><span style="width:65px">⚙</span></div></div>

<div class="cl bass" style="left:1293px;top:912px;width:537px"><div class="t">Spire_x64_v1.1.1 [64bit]CH1</div><div class="ln" style="top:23px;background:var(--h);height:2px;left:0"></div><div class="ln" style="top:33px;height:2px;background:#3f9598"></div><div class="abs" style="left:4px;top:40px;width:520px;height:3px;background:repeating-linear-gradient(90deg,#2a5a5c 0 6px,transparent 6px 8px)"></div><div class="ln" style="top:50px;height:2px;background:#3f9598"></div></div>
<div class="cl bass" style="left:2079px;top:912px;width:535px"><div class="t">Spire_x64_v1.1.1 [64bit]CH1</div><div class="ln" style="top:23px;background:var(--h);height:2px;left:0"></div><div class="ln" style="top:33px;height:2px;background:#3f9598"></div><div class="abs" style="left:4px;top:40px;width:520px;height:3px;background:repeating-linear-gradient(90deg,#2a5a5c 0 6px,transparent 6px 8px)"></div><div class="ln" style="top:50px;height:2px;background:#3f9598"></div></div>
<div class="cl bass" style="left:770px;top:976px;width:522px"><div class="h" style="background:var(--h)"><span style="width:130px">Spire_x64_v</span><span style="width:130px">Spire_x64_v</span><span style="width:130px">Spire_x64_v</span><span style="width:130px">Spire_x64_v</span></div><div class="ln" style="top:33px;height:2px;background:#3f9598"></div><div class="abs" style="left:4px;top:40px;width:510px;height:3px;background:repeating-linear-gradient(90deg,#2a5a5c 0 6px,transparent 6px 8px)"></div><div class="ln" style="top:50px;height:2px;background:#3f9598"></div></div>
<div class="cl bass" style="left:1817px;top:976px;width:259px"><div class="h"><span style="width:130px">Spire_x64_v</span><span style="width:130px">Spire_x64_v</span></div><div class="ln" style="top:33px;height:2px;background:#3f9598"></div><div class="abs" style="left:4px;top:40px;width:250px;height:3px;background:repeating-linear-gradient(90deg,#2a5a5c 0 6px,transparent 6px 8px)"></div><div class="ln" style="top:50px;height:2px;background:#3f9598"></div></div>
<div class="cl bass" style="left:2601px;top:976px;width:217px"><div class="h"><span style="width:130px">Spire_x64_v</span><span style="width:130px">Spire_x6</span></div><div class="ln" style="top:33px;height:2px;background:#3f9598"></div><div class="abs" style="left:4px;top:40px;width:213px;height:3px;background:repeating-linear-gradient(90deg,#2a5a5c 0 6px,transparent 6px 8px)"></div><div class="ln" style="top:50px;height:2px;background:#3f9598"></div></div>
<div class="cl bass" style="left:770px;top:1040px;width:833px"><div class="t">Sweep UP</div><div class="gb">⚙</div><div class="abs" style="left:205px;top:8px;width:40px;height:14px;background:#2a6a6c;clip-path:polygon(0 50%,100% 0,100% 100%)"></div><div class="abs" style="left:465px;top:36px;width:40px;height:18px;background:#2a6a6c;clip-path:polygon(0 50%,100% 0,100% 100%)"></div><div class="abs" style="left:465px;top:8px;width:40px;height:14px;background:#2a6a6c;clip-path:polygon(0 50%,100% 0,100% 100%)"></div><div class="abs" style="left:205px;top:36px;width:40px;height:18px;background:#2a6a6c;clip-path:polygon(0 50%,100% 0,100% 100%)"></div></div>
<div class="cl bass" style="left:1702px;top:1040px;width:113px"><div class="t">Sweep UP</div><div class="gb">⚙</div><div class="abs" style="left:65px;top:32px;width:40px;height:24px;background:#2a6a6c;clip-path:polygon(0 50%,100% 0,100% 100%)"></div></div>
<div class="cl bass" style="left:1961px;top:1040px;width:115px"><div class="t">Sweep UP</div><div class="gb">⚙</div><div class="abs" style="left:68px;top:32px;width:40px;height:24px;background:#2a6a6c;clip-path:polygon(0 50%,100% 0,100% 100%)"></div></div>
<div class="cl bass" style="left:2209px;top:1040px;width:456px"><div class="t">Sweep UP</div><div class="gb">⚙</div><div class="abs" style="left:350px;top:8px;width:40px;height:14px;background:#2a6a6c;clip-path:polygon(0 50%,100% 0,100% 100%)"></div><div class="abs" style="left:350px;top:36px;width:40px;height:18px;background:#2a6a6c;clip-path:polygon(0 50%,100% 0,100% 100%)"></div></div>
<div class="cl bass" style="left:2747px;top:1040px;width:71px"><div class="t">GFB1</div><div class="gb">⚙</div></div>
<div class="cl cym" style="left:770px;top:1104px;width:912px"><div class="t">Cymbal</div><div class="gb">⚙</div><div class="wv" style="left:130px;top:6px;width:130px"></div><div class="wv" style="left:130px;top:34px;width:130px"></div><div class="wv" style="left:652px;top:6px;width:258px"></div><div class="wv" style="left:652px;top:34px;width:258px"></div></div>
<div class="cl cym" style="left:2209px;top:1104px;width:456px"><div class="t">Cymbal</div><div class="gb">⚙</div><div class="wv" style="left:130px;top:6px;width:322px"></div><div class="wv" style="left:130px;top:34px;width:322px"></div></div>
<div class="cl perc" style="left:770px;top:1168px;width:261px"><div class="h"><span style="width:33px">PE</span><span style="width:33px">PE</span><span style="width:33px">PE</span><span style="width:33px">PE</span><span style="width:33px">PE</span><span style="width:33px">PE</span><span style="width:33px">PE</span><span style="width:33px">PE</span></div><div class="wv" style="left:0;top:30px;width:100%;height:26px"></div></div>
<div class="cl perc" style="left:1554px;top:1168px;width:261px"><div class="h"><span style="width:33px">PE</span><span style="width:33px">PE</span><span style="width:33px">PE</span><span style="width:33px">PE</span><span style="width:33px">PE</span><span style="width:33px">PE</span><span style="width:33px">PE</span><span style="width:33px">PE</span></div><div class="wv" style="left:0;top:30px;width:100%;height:26px"></div></div>
<div class="cl perc" style="left:2338px;top:1168px;width:261px"><div class="h"><span style="width:33px">PE</span><span style="width:33px">PE</span><span style="width:33px">PE</span><span style="width:33px">PE</span><span style="width:33px">PE</span><span style="width:33px">PE</span><span style="width:33px">PE</span><span style="width:33px">PE</span></div><div class="wv" style="left:0;top:30px;width:100%;height:26px"></div></div>
<div class="cl fx" style="left:901px;top:1232px;width:505px"><div class="t">FX</div><div class="gb">⚙</div><div class="abs" style="left:120px;top:8px;width:6px;height:12px;background:#3d5a18"></div><div class="abs" style="left:120px;top:36px;width:6px;height:12px;background:#3d5a18"></div></div>
<div class="cl fx" style="left:2061px;top:1232px;width:15px"></div>
<div class="cl fx" style="left:2209px;top:1232px;width:456px"><div class="t">FX</div><div class="gb">⚙</div></div>
<div class="cl red" style="left:770px;top:1296px;width:1306px"><div class="t">HH Groove</div><div class="gb">⚙</div><div class="abs" style="left:262px;top:0;width:250px;height:62px"><div class="t" style="position:relative;display:inline-block">HH Groove</div></div><div class="wv" style="left:120px;top:8px;width:140px"></div><div class="wv" style="left:120px;top:36px;width:140px"></div><div class="wv" style="left:60px;top:36px;width:60px"></div><div class="wv" style="left:520px;top:8px;width:300px"></div><div class="wv" style="left:300px;top:36px;width:520px"></div><div class="abs" style="left:315px;top:14px;width:140px;height:2px;background:#5a0c22;transform:rotate(-10deg);transform-origin:right"></div></div>
<div class="cl red" style="left:2209px;top:1296px;width:456px"><div class="t">HH Groove</div><div class="gb">⚙</div><div class="wv" style="left:130px;top:8px;width:180px"></div><div class="wv" style="left:60px;top:36px;width:250px"></div></div>
<div class="cl hh" style="left:770px;top:1360px;width:1306px"><div class="t">HH</div><div class="gb">⚙</div><div class="ln" style="top:16px"></div><div class="ln" style="top:46px"></div><div class="wv" style="left:784px;top:6px;width:115px"></div><div class="wv" style="left:784px;top:34px;width:115px"></div></div>
<div class="cl hh2" style="left:770px;top:1424px;width:1045px"><div class="t">HH2</div><div class="gb">⚙</div><div class="wv" style="left:130px;top:6px;width:130px"></div><div class="wv" style="left:130px;top:34px;width:130px"></div><div class="wv" style="left:264px;top:6px;width:520px"></div><div class="wv" style="left:264px;top:34px;width:520px"></div></div>
<div class="cl hh2" style="left:2012px;top:1424px;width:64px"><div class="t">HH2</div><div class="gb">⚙</div></div>
<div class="cl hh2" style="left:2209px;top:1424px;width:456px"><div class="t">HH2</div><div class="gb">⚙</div><div class="wv" style="left:60px;top:6px;width:330px"></div><div class="wv" style="left:60px;top:34px;width:330px"></div></div>
<div class="cl shk" style="left:770px;top:1488px;width:1045px"><div class="t">SHAKER</div><div class="wv" style="left:130px;top:28px;width:570px;height:20px"></div><div class="wv" style="left:700px;top:28px;width:330px;height:20px;opacity:.7"></div></div>
<div class="cl shk" style="left:2012px;top:1488px;width:64px"><div class="t">SHAKER</div></div>
<div class="cl shk" style="left:2472px;top:1488px;width:193px"><div class="t">SHAKER</div><div class="wv" style="left:0;top:28px;width:120px;height:20px"></div></div>
</div>

<div id="vs"><svg class="abs" style="left:8px;top:12px" width="18" height="12"><path d="M0 12L9 0L18 12Z" fill="#888"/></svg><div class="abs" style="left:11px;top:38px;width:10px;height:1264px;background:#7e7e7e;border-radius:5px"></div><svg class="abs" style="left:8px;top:1448px" width="18" height="12"><path d="M0 0L9 12L18 0Z" fill="#888"/></svg></div>
<div class="abs" style="left:2850px;top:0;width:10px;height:1574px;background:#17181a"></div>

<div id="bot">
<div class="abs" style="left:0;top:0;width:517px;height:36px;border-right:2px solid #141416"></div>
<span class="abs" style="left:44px;top:6px;font-size:22px;color:#ccc">M</span>
<span class="abs" style="left:144px;top:6px;font-size:22px;color:#ccc">S</span>
<svg class="abs" style="left:237px;top:7px" width="22" height="24"><path d="M6 7a8 8 0 1 0 10 0" stroke="#3d8fe0" stroke-width="3" fill="none"/><path d="M11 2v10" stroke="#3d8fe0" stroke-width="3"/></svg>
<span class="abs" style="left:352px;top:7px;font-size:22px;color:#bbb">Tiny</span>
<svg class="abs" style="left:446px;top:12px" width="16" height="12"><path d="M0 0H16L8 12Z" fill="#888"/></svg>
<div class="abs" style="left:488px;top:6px;width:14px;height:5px;background:#777"></div><div class="abs" style="left:488px;top:14px;width:14px;height:5px;background:#777"></div><div class="abs" style="left:488px;top:22px;width:14px;height:5px;background:#777"></div>
<svg class="abs" style="left:533px;top:9px" width="12" height="18"><path d="M12 0V18L0 9Z" fill="#888"/></svg>
<div class="abs" style="left:568px;top:10px;width:1000px;height:14px;background:#808080;border-radius:4px"></div>
<svg class="abs" style="left:2572px;top:9px" width="12" height="18"><path d="M0 0V18L12 9Z" fill="#888"/></svg>
<div class="abs" style="left:2612px;top:16px;width:180px;height:4px;background:#888"></div>
<div class="abs" style="left:2612px;top:12px;width:10px;height:10px;border-radius:5px;background:#888"></div>
<div class="abs" style="left:2631px;top:4px;width:8px;height:24px;border-radius:3px;background:#888"></div>
<div class="abs" style="left:2779px;top:8px;width:18px;height:18px;border-radius:9px;background:#888"></div>
<div class="abs" style="left:2830px;top:2px;width:14px;height:6px;background:#888"></div><div class="abs" style="left:2830px;top:11px;width:14px;height:6px;background:#888"></div>
<div class="abs" style="left:2818px;top:20px;width:8px;height:4px;background:#888"></div><div class="abs" style="left:2818px;top:27px;width:8px;height:4px;background:#888"></div>
</div>
</body></html>
